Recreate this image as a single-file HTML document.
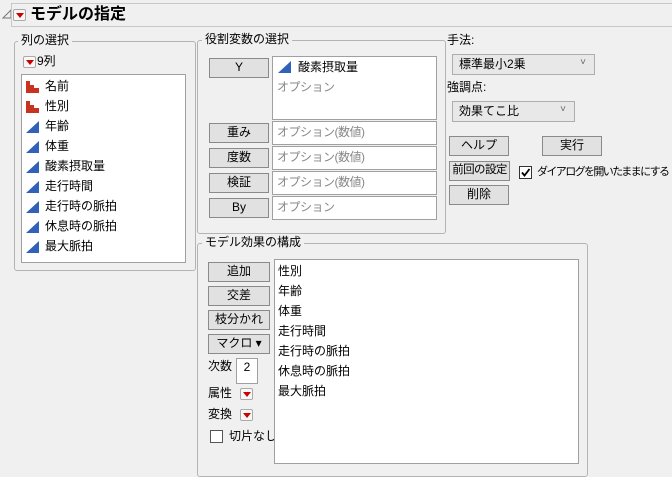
<!DOCTYPE html><html><head><meta charset="utf-8"><style>
body{margin:0;width:672px;height:477px;background:#f0f0f0;position:relative;overflow:hidden;font-family:"Liberation Sans","Noto Sans CJK JP",sans-serif;font-size:12px;color:#000}
.a{position:absolute}
.box{position:absolute;background:#fff;border:1px solid #a0a0a0}
.grp{position:absolute;border:1px solid #b4b4b4;border-radius:3px}
.lg{position:absolute;background:#f0f0f0;padding:0 3px;line-height:14px}
.btn{position:absolute;background:#e1e1e1;border:1px solid #8a8a8a;text-align:center;line-height:17px;box-sizing:border-box;white-space:nowrap;overflow:hidden}
.rb{position:absolute;width:13px;height:12px;border:1px solid #aaa;border-radius:2px;background:#f8f8f8;box-sizing:border-box}
.rb:after{content:"";position:absolute;left:2px;top:3px;border-left:4px solid transparent;border-right:4px solid transparent;border-top:5px solid #c00}
.it{position:absolute;line-height:16px;white-space:nowrap}
.gr{color:#888}
.dd{position:absolute;background:#e8e8e8;border:1px solid #adadad;line-height:18px;padding-left:6px;box-sizing:border-box}
.dd:after{content:"˅";position:absolute;right:8px;top:-1px;color:#666;font-size:10px}
.cb{position:absolute;width:13px;height:13px;border:1px solid #333;background:#fff;box-sizing:border-box}
</style></head><body>
<svg class="a" style="left:2px;top:9px" width="10" height="10"><path d="M1 9H9V1Z" fill="none" stroke="#777"/></svg>
<div class="a" style="left:11px;top:3px;width:661px;height:24px;border:1px solid #c8c8c8;border-right:none;box-sizing:border-box;background:#f0f0f0"></div>
<div class="rb" style="left:13px;top:9px"></div>
<div class="a" style="left:30px;top:4px;font-size:16px;font-weight:bold;line-height:22px">モデルの指定</div>

<div class="grp" style="left:14px;top:41px;width:180px;height:228px"></div>
<div class="lg" style="left:18px;top:33px">列の選択</div>
<div class="rb" style="left:23px;top:56px"></div>
<div class="a" style="left:37px;top:53px;line-height:16px">9列</div>
<div class="box" style="left:21px;top:74px;width:163px;height:187px"></div>
<svg class="a" style="left:25px;top:78px" width="16" height="180">
<g fill="#c8321e"><rect x="1" y="3" width="4" height="12"/><rect x="5" y="7" width="4" height="8"/><rect x="9" y="10" width="5" height="5"/>
<rect x="1" y="23" width="4" height="12"/><rect x="5" y="27" width="4" height="8"/><rect x="9" y="30" width="5" height="5"/></g>
<g fill="#2f62b8"><path d="M1 55L14 43V55Z"/><path d="M1 75L14 63V75Z"/><path d="M1 95L14 83V95Z"/><path d="M1 115L14 103V115Z"/><path d="M1 135L14 123V135Z"/><path d="M1 155L14 143V155Z"/><path d="M1 175L14 163V175Z"/></g></svg>
<div class="it" style="left:45px;top:78px">名前</div>
<div class="it" style="left:45px;top:98px">性別</div>
<div class="it" style="left:45px;top:118px">年齢</div>
<div class="it" style="left:45px;top:138px">体重</div>
<div class="it" style="left:45px;top:158px">酸素摂取量</div>
<div class="it" style="left:45px;top:178px">走行時間</div>
<div class="it" style="left:45px;top:198px">走行時の脈拍</div>
<div class="it" style="left:45px;top:218px">休息時の脈拍</div>
<div class="it" style="left:45px;top:238px">最大脈拍</div>

<div class="grp" style="left:197px;top:40px;width:247px;height:192px"></div>
<div class="lg" style="left:202px;top:32px">役割変数の選択</div>
<div class="btn" style="left:209px;top:58px;width:60px;height:20px">Y</div>
<div class="box" style="left:272px;top:56px;width:163px;height:62px"></div>
<svg class="a" style="left:277px;top:59px" width="16" height="16"><path d="M1 14L14 2V14Z" fill="#2f62b8"/></svg>
<div class="it" style="left:298px;top:59px">酸素摂取量</div>
<div class="it gr" style="left:277px;top:79px;letter-spacing:-0.5px">オプション</div>
<div class="btn" style="left:209px;top:123px;width:60px;height:20px">重み</div>
<div class="box" style="left:272px;top:121px;width:163px;height:22px"></div><div class="it gr" style="left:277px;top:124px;letter-spacing:-0.5px">オプション(数値)</div>
<div class="btn" style="left:209px;top:148px;width:60px;height:20px">度数</div>
<div class="box" style="left:272px;top:146px;width:163px;height:22px"></div><div class="it gr" style="left:277px;top:149px;letter-spacing:-0.5px">オプション(数値)</div>
<div class="btn" style="left:209px;top:173px;width:60px;height:20px">検証</div>
<div class="box" style="left:272px;top:171px;width:163px;height:22px"></div><div class="it gr" style="left:277px;top:174px;letter-spacing:-0.5px">オプション(数値)</div>
<div class="btn" style="left:209px;top:198px;width:60px;height:20px">By</div>
<div class="box" style="left:272px;top:196px;width:163px;height:22px"></div><div class="it gr" style="left:277px;top:199px;letter-spacing:-0.5px">オプション</div>

<div class="it" style="left:447px;top:32px">手法:</div>
<div class="dd" style="left:452px;top:54px;width:143px;height:21px">標準最小2乗</div>
<div class="it" style="left:447px;top:79px">強調点:</div>
<div class="dd" style="left:452px;top:101px;width:123px;height:21px">効果てこ比</div>
<div class="btn" style="left:449px;top:136px;width:60px;height:20px">ヘルプ</div>
<div class="btn" style="left:542px;top:136px;width:60px;height:20px">実行</div>
<div class="btn" style="left:449px;top:161px;width:61px;height:20px;font-size:11.5px;letter-spacing:-0.6px">前回の設定</div>
<div class="cb" style="left:519px;top:166px"></div>
<svg class="a" style="left:519px;top:166px" width="13" height="13"><path d="M3 6.5L5.5 9.5L10.5 3" fill="none" stroke="#000" stroke-width="1.8"/></svg>
<div class="it" style="left:537px;top:164px;font-size:11px;letter-spacing:-1.6px">ダイアログを開いたままにする</div>
<div class="btn" style="left:449px;top:185px;width:60px;height:20px">削除</div>

<div class="grp" style="left:197px;top:243px;width:389px;height:232px"></div>
<div class="lg" style="left:202px;top:235px">モデル効果の構成</div>
<div class="btn" style="left:208px;top:262px;width:62px;height:20px">追加</div>
<div class="btn" style="left:208px;top:286px;width:62px;height:20px">交差</div>
<div class="btn" style="left:208px;top:310px;width:62px;height:20px">枝分かれ</div>
<div class="btn" style="left:208px;top:334px;width:62px;height:20px">マクロ ▾</div>
<div class="it" style="left:208px;top:358px">次数</div>
<div class="box" style="left:236px;top:358px;width:20px;height:24px;text-align:center;line-height:16px">2</div>
<div class="it" style="left:208px;top:385px">属性</div><div class="rb" style="left:240px;top:388px"></div>
<div class="it" style="left:208px;top:406px">変換</div><div class="rb" style="left:240px;top:409px"></div>
<div class="cb" style="left:210px;top:430px;border-color:#555"></div>
<div class="it" style="left:229px;top:428px">切片なし</div>
<div class="box" style="left:274px;top:259px;width:303px;height:203px"></div>
<div class="it" style="left:278px;top:263px">性別</div>
<div class="it" style="left:278px;top:283px">年齢</div>
<div class="it" style="left:278px;top:303px">体重</div>
<div class="it" style="left:278px;top:323px">走行時間</div>
<div class="it" style="left:278px;top:343px">走行時の脈拍</div>
<div class="it" style="left:278px;top:363px">休息時の脈拍</div>
<div class="it" style="left:278px;top:383px">最大脈拍</div>
</body></html>
